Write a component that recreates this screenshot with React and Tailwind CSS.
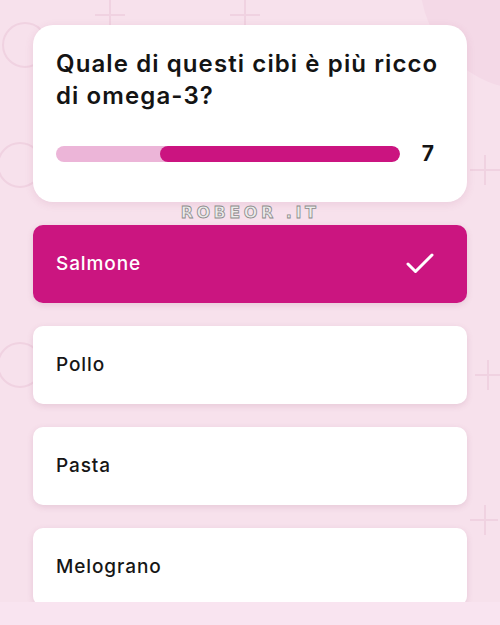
import { Check } from 'lucide-react';

const options = [
    { label: 'Salmone', selected: true },
    { label: 'Pollo' },
    { label: 'Pasta' },
    { label: 'Melograno' },
];

// faint decorative shapes behind the quiz
function Backdrop() {
    return (
        <svg className="absolute inset-0 w-full h-full" viewBox="0 0 500 625" fill="none">
            <circle cx="530" cy="-20" r="110" fill="#f4d9e7" />
            <g stroke="#f0d2e1" strokeWidth="2">
                <circle cx="25" cy="45" r="22" />
                <circle cx="20" cy="165" r="22" />
                <circle cx="20" cy="365" r="22" />
                <path d="M95 15 h30 M110 0 v30" />
                <path d="M470 170 h30 M485 155 v30" />
                <path d="M475 375 h25 M488 360 v30" />
                <path d="M470 520 h28 M485 505 v30" />
                <path d="M230 15 h30 M245 0 v30" />
            </g>
        </svg>
    );
}

export default function App() {
    return (
        <div className="relative w-[500px] h-[625px] overflow-hidden bg-[#f7e1ec]" style={{ fontFamily: 'Inter, "Open Sans", sans-serif' }}>
            <Backdrop />
            <div className="relative h-[602px] overflow-hidden px-[33px] pt-[25px] flex flex-col gap-[23px]">
                <div className="bg-white rounded-[20px] shadow-[0_2px_8px_rgba(160,60,110,0.12)] px-[23px] pt-[23px] pb-[38px]">
                    <h1 className="text-[24px] leading-[32px] font-semibold text-[#141414] tracking-[1.1px]">
                        Quale di questi cibi è più ricco di omega-3?
                    </h1>
                    <div className="mt-[31px] flex items-center pr-[8px]">
                        <div className="flex-1 h-[16px] rounded-full bg-[#ecb5d8] overflow-hidden flex">
                            <div className="w-[104px] shrink-0" />
                            <div className="flex-1 bg-[#cb1480] rounded-full" />
                        </div>
                        <span className="ml-[22px] mr-[2px] text-[21px] font-bold text-[#141414] leading-none">7</span>
                    </div>
                </div>

                {options.map((o) => (
                    <div
                        key={o.label}
                        className={`shrink-0 h-[78px] rounded-[10px] flex items-center justify-between px-[23px] shadow-[0_2px_6px_rgba(140,60,100,0.15)] ${
                            o.selected ? 'bg-[#cb1580] text-white' : 'bg-white text-[#161616]'
                        }`}
                    >
                        <span className="text-[19px] font-medium tracking-[0.9px]">{o.label}</span>
                        {o.selected && <Check className="w-[36px] h-[36px] mr-[6px]" strokeWidth={2} />}
                    </div>
                ))}

                <div className="absolute left-0 right-0 top-[205px] text-center text-[16px] leading-[16px] tracking-[0.22em] font-bold text-[#ececec] [-webkit-text-stroke:0.8px_#8a8a8a]" style={{ fontFamily: '"DejaVu Sans", sans-serif' }}>
                    ROBEOR .IT
                </div>
            </div>
            <div className="relative h-[23px] bg-[#f9e4f0]" />
        </div>
    );
}
